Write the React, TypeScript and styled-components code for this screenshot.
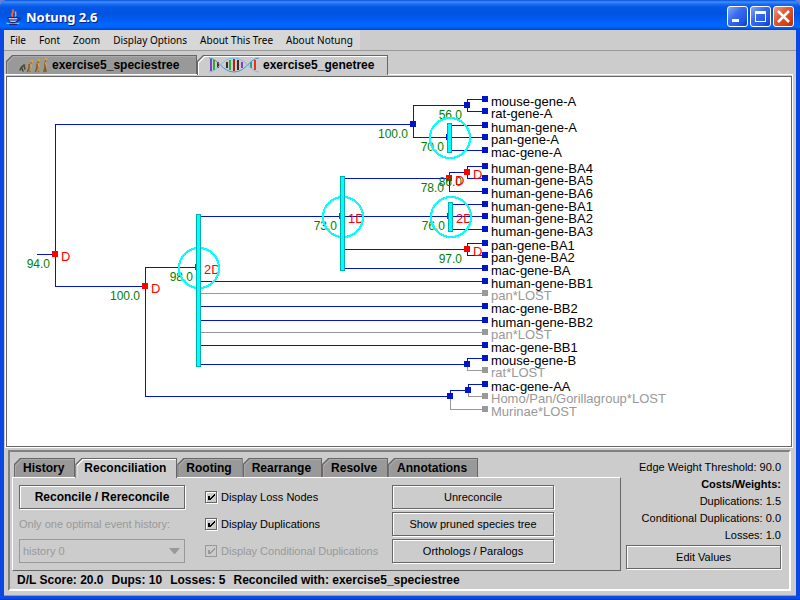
import React from "react";
import styled, { createGlobalStyle, css } from "styled-components";

const GlobalStyle = createGlobalStyle`
  *, *::before, *::after { box-sizing: border-box; }
  html, body { margin: 0; padding: 0; }
  body {
    background: #6b7fd0;
    color: #000;
    font: 11px/16px "Liberation Sans", Arial, sans-serif;
    overflow: hidden;
  }
  button, select, input { font: inherit; color: inherit; }
`;

const Window = styled.div`
  display: flex;
  flex-direction: column;
  min-height: 100vh;
  border-radius: 8px 8px 0 0;
  overflow: hidden;
  background: #0a48e0;
`;

const TitleBar = styled.header`
  display: flex;
  align-items: center;
  gap: 4px;
  height: 30px;
  padding: 3px 6px 0 6px;
  background: linear-gradient(
    #0a4fd8 0, #3c92ff 2px, #1b6cf2 4px, #0458e4 7px, #0053e1 14px,
    #0060f8 21px, #0068ff 26px, #005cf0 28px, #0040c8 30px
  );
`;

const Title = styled.h1`
  flex: 1;
  margin: 0;
  color: #fff;
  font: bold 13px/20px "Noto Sans", "Open Sans", sans-serif;
  text-shadow: 1px 1px 0 #0a1f80;
`;

const WindowButtons = styled.div`
  display: flex;
  gap: 2px;
`;

const WindowButton = styled.button<{ $danger?: boolean }>`
  display: grid;
  place-items: center;
  width: 21px;
  height: 21px;
  padding: 0;
  border: 1px solid #fff;
  border-radius: 3px;
  background: ${(p) =>
    p.$danger
      ? "linear-gradient(135deg, #f0a088 0, #e25a34 40%, #d23c10 80%, #a82c08 100%)"
      : "linear-gradient(135deg, #86a8f8 0, #3a6cf0 40%, #2258e8 75%, #0a3cb8 100%)"};
`;

const Content = styled.main`
  flex: 1;
  display: flex;
  flex-direction: column;
  margin: 0 4px;
  background: #ccc;
  border-bottom: 1px solid #999;
`;

const Footing = styled.div`
  height: 5px;
  background: linear-gradient(#1050e8 0, #0a48e0 3px, #001c98 5px);
`;

const MenuRow = styled.div`
  display: flex;
  border-bottom: 1px solid #999;
`;

const MenuBar = styled.nav`
  display: flex;
  height: 20px;
  padding-right: 1px;
  background: #d7d7d7;
`;

const MenuItems = styled.div`
  display: flex;
  gap: 1px;
`;

const MenuItem = styled.button`
  padding: 0 6px;
  border: 0;
  background: none;
  font: 10px/20px "Noto Sans", Verdana, sans-serif;
  white-space: nowrap;
`;

const TabStrip = styled.div<{ $top?: boolean }>`
  display: flex;
  padding: ${(p) => (p.$top ? "4px 0 0 2px" : "0 0 0 2px")};
`;

const cut = "polygon(6px 0, 100% 0, 100% 100%, 0 100%, 0 6px)";

const Tab = styled.button<{ $active?: boolean; $document?: boolean }>`
  position: relative;
  isolation: isolate;
  display: flex;
  align-items: center;
  gap: 4px;
  height: 19px;
  padding: ${(p) => (p.$document ? "0 10px 0 12px" : "0 11px 0 9px")};
  min-width: ${(p) => (p.$document ? "191px" : "0")};
  border: 0;
  background: #666;
  clip-path: ${cut};
  font-size: 12px;
  font-weight: bold;
  white-space: nowrap;
  &::before, &::after {
    content: "";
    position: absolute;
    z-index: -1;
    clip-path: ${cut};
  }
  &::before {
    inset: 1px 1px 0 1px;
    background: ${(p) => (p.$active ? "#fff" : "#aaa")};
  }
  &::after {
    inset: 2px 1px 0 2px;
    background: ${(p) => (p.$active ? "#ccc" : "#999")};
  }
  ${(p) =>
    p.$active &&
    css`
      height: 20px;
      margin-bottom: -1px;
      z-index: 1;
    `}
`;

const CanvasFrame = styled.section`
  flex: 1;
  display: flex;
  margin: 0 3px 2px 1px;
  border: 1px solid #fff;
  padding: 1px 0 0 0;
  background: #ccc;
`;

const Canvas = styled.div`
  flex: 1;
  border: 1px solid #666;
  background: #fff;
  overflow: hidden;
  svg { display: block; }
`;

const BottomPanel = styled.section`
  display: grid;
  grid-template-columns: minmax(0, 609px) minmax(160px, 1fr);
  margin: 0 5px 4px 4px;
  padding: 6px 8px 0 2px;
  border: 2px solid;
  border-color: #808080 #fff #fff #808080;
`;

const Pane = styled.div`
  display: grid;
  grid-template-columns: 166px 167px 162px;
  grid-auto-rows: 25px;
  gap: 2px 20px;
  align-items: center;
  padding: 6px 6px 7px 6px;
  border: 1px solid;
  border-color: #fff #666 #666 #fff;
`;

const MetalButton = styled.button<{ $strong?: boolean }>`
  width: 100%;
  height: 24px;
  padding: 0;
  border: 1px solid #666;
  background: #ccc;
  box-shadow: 1px 1px 0 #fff, inset 1px 1px 0 #fff;
  font-size: ${(p) => (p.$strong ? "12px" : "11px")};
  font-weight: ${(p) => (p.$strong ? "bold" : "normal")};
`;

const HistoryLabel = styled.label`
  color: #999;
  white-space: nowrap;
`;

const SelectBox = styled.div`
  display: grid;
  align-items: center;
  & > * { grid-area: 1 / 1; }
  svg { justify-self: end; margin-right: 5px; pointer-events: none; }
`;

const HistorySelect = styled.select`
  appearance: none;
  width: 100%;
  height: 24px;
  padding: 0 3px;
  border: 1px solid #999;
  border-radius: 0;
  background: #ccc;
  color: #999;
  opacity: 1;
`;

const CheckLabel = styled.label<{ $disabled?: boolean }>`
  display: flex;
  align-items: center;
  gap: 4px;
  color: ${(p) => (p.$disabled ? "#999" : "#000")};
  white-space: nowrap;
`;

const CheckBox = styled.span`
  display: grid;
  & > * { grid-area: 1 / 1; }
  svg { pointer-events: none; }
`;

const CheckInput = styled.input`
  appearance: none;
  width: 12px;
  height: 12px;
  margin: 0;
  border: 1px solid #666;
  box-shadow: 1px 1px 0 #fff, inset 1px 1px 0 #fff;
  &:disabled { border-color: #999; box-shadow: none; }
`;

const Status = styled.p`
  display: flex;
  gap: 8px;
  margin: 0;
  padding-left: 5px;
  font-size: 12px;
  font-weight: bold;
  line-height: 18px;
  white-space: nowrap;
`;

const Costs = styled.aside`
  display: flex;
  flex-direction: column;
  margin-left: 5px;
  text-align: right;
  line-height: 17px;
`;

const CostLine = styled.p<{ $strong?: boolean }>`
  margin: 0;
  font-weight: ${(p) => (p.$strong ? "bold" : "normal")};
  white-space: nowrap;
`;

const CostLines = styled.div`
  padding: 1px 0;
`;

/* ---------- icons ---------- */

const JavaIcon = () => (
  <svg width="16" height="16" viewBox="0 0 16 16" fill="none">
    <path d="M7 7.500C3.500 5 9 4 6.500 .5" stroke="#f0602c" strokeWidth="2" />
    <path d="M9 7.500c2.500-2-1-2.500 1-5" stroke="#ff9060" strokeWidth="1.500" />
    <path d="M2 8.500h10c0 2.500-1.500 4.500-3 5H5c-1.500-.5-3-2.500-3-5z" fill="#b8c4e8" stroke="#1c2470" />
    <path d="M12 9c3.500-1 3 2.500-.8 3M3 11h8" stroke="#1c2470" />
    <path d="M.5 14c3 1.500 9 1.500 13 0" stroke="#c0ccf0" />
    <path d="M3 15.500h8" stroke="#1c2470" />
  </svg>
);

const EvolutionIcon = () => (
  <svg width="30" height="16" viewBox="0 0 30 16" fill="none" strokeLinecap="round">
    <g stroke="#4a4636" strokeWidth="1.500">
      <path d="M2 13l1.500-3 2.500-1.500L7 12M3.500 10L5 14" />
    </g>
    <circle cx="6" cy="8.500" r="1.300" fill="#5a5038" />
    <g stroke="#8a5a14" strokeWidth="1.500">
      <path d="M13.500 5.500L11 8v3l1 3.500M11 11l-1.500 3.500" />
      <path d="M20.500 4.500L19 7v3.500l1.500 4M19 10.500L17.500 14.500" />
      <path d="M27.500 3.500L27 7v3.500l1 4M27 10.500l-1 4" />
    </g>
    <g stroke="#e8ac48">
      <path d="M12.500 6.500l1 3.500M19.500 6l2 3M27 5l1.500 4M12 12v2M20 12v2" />
    </g>
    <g fill="#dca040">
      <circle cx="14" cy="4" r="1.600" />
      <circle cx="21" cy="3" r="1.600" />
      <circle cx="28" cy="2" r="1.600" />
    </g>
  </svg>
);

const rungs: [number, number, number, string][] = [
  [2, 2, 14, "#7048c0"], [5, 3, 13, "#40a030"], [9, 5, 11, "#6c2020"],
  [18, 5, 11, "#303028"], [21, 3, 13, "#38a838"], [25, 2, 14, "#a02828"],
  [29, 3, 13, "#402820"], [33, 5, 11, "#8040c0"], [42, 5, 11, "#30a080"], [46, 3, 13, "#e03820"],
];

const DnaIcon = () => (
  <svg width="50" height="16" viewBox="0 0 50 16" fill="none">
    {rungs.map(([x, a, b, c]) => (
      <path key={x} d={`M${x} ${a}V${b}`} stroke={c} strokeWidth="2" />
    ))}
    <path d="M0 1C9 1 13 15 25 15S41 1 50 1" stroke="#3c98d8" />
    <path d="M0 15C9 15 13 1 25 1S41 15 50 15" stroke="#78bcec" />
  </svg>
);

const Tick = ({ color }: { color: string }) => (
  <svg width="12" height="12" viewBox="0 0 12 12" shapeRendering="crispEdges">
    <path d="M3 5h2v2h1V6h1V5h1V4h1V3h1v2H9v1H8v1H7v1H6v1H3z" fill={color} />
  </svg>
);

/* ---------- gene tree ---------- */

const BLUE = "#0014c8";
const GRAY = "#999";
const RED = "#f00";

const TreeText = styled.text`
  font: 13px "Liberation Sans", Arial, sans-serif;
`;
const ScoreText = styled(TreeText)`
  font-size: 12px;
  fill: #008000;
  text-anchor: end;
`;
const EventText = styled(TreeText)`
  fill: #f00;
`;

// name, y, x where the branch starts
const leaves: [string, number, number][] = [
  ["mouse-gene-A", 99, 467], ["rat-gene-A", 111, 467], ["human-gene-A", 125, 450],
  ["pan-gene-A", 137, 450], ["mac-gene-A", 150, 450], ["human-gene-BA4", 166, 467],
  ["human-gene-BA5", 178, 467], ["human-gene-BA6", 191, 449], ["human-gene-BA1", 204, 450],
  ["human-gene-BA2", 216, 450], ["human-gene-BA3", 229, 450], ["pan-gene-BA1", 243, 467],
  ["pan-gene-BA2", 255, 467], ["mac-gene-BA", 268, 343], ["human-gene-BB1", 281, 199],
  ["pan*LOST", 293, 199], ["mac-gene-BB2", 306, 199], ["human-gene-BB2", 320, 199],
  ["pan*LOST", 332, 199], ["mac-gene-BB1", 345, 199], ["mouse-gene-B", 358, 467],
  ["rat*LOST", 370, 467], ["mac-gene-AA", 384, 468], ["Homo/Pan/Gorillagroup*LOST", 396, 468],
  ["Murinae*LOST", 409, 450],
];

// x1, x2, y
const branches: [number, number, number][] = [
  [37, 55, 254], [55, 413, 124], [413, 467, 105], [413, 449, 137], [55, 145, 286],
  [145, 198, 267], [199, 342, 216], [343, 449, 178], [449, 467, 172], [343, 450, 216],
  [343, 467, 249], [199, 467, 364], [145, 450, 396], [450, 468, 390],
];

// x, y1, y2, colour
const stems: [number, number, number, string][] = [
  [55, 124, 286, BLUE], [413, 105, 137, BLUE], [467, 99, 111, BLUE], [145, 267, 396, BLUE],
  [467, 166, 178, BLUE], [449, 172, 191, BLUE], [467, 243, 255, BLUE], [467, 358, 364, BLUE],
  [467, 364, 370, GRAY], [468, 384, 390, BLUE], [468, 390, 396, GRAY], [450, 390, 396, BLUE],
  [450, 396, 409, GRAY],
];

// x, y, colour, score, event
const nodes: [number, number, string, string, string][] = [
  [55, 254, RED, "94.0", "D"], [145, 286, RED, "100.0", "D"], [413, 124, BLUE, "100.0", ""],
  [467, 105, BLUE, "56.0", ""], [449, 137, BLUE, "70.0", ""], [467, 172, RED, "86.0", "D"],
  [449, 178, RED, "78.0", "D"], [450, 216, RED, "76.0", "2D"], [467, 249, RED, "97.0", "D"],
  [342, 216, RED, "73.0", "1D"], [198, 267, RED, "98.0", "2D"], [467, 364, BLUE, "", ""],
  [468, 390, BLUE, "", ""], [450, 396, BLUE, "", ""],
];

// bar x, top, bottom, circle x, circle y
const polytomies: [number, number, number, number, number][] = [
  [447, 123, 153, 450, 138], [448, 202, 232, 451, 217],
  [340, 176, 271, 343, 217], [196, 214, 367, 199, 268],
];

const GeneTree = () => (
  <svg width="784" height="369" viewBox="7 77 784 369" role="img" aria-label="Gene tree">
    <g shapeRendering="crispEdges">
      {leaves.map(([n, y, x], i) => (
        <rect key={i} x={x} y={y} width={485 - x} height="1" fill={n.endsWith("LOST") ? GRAY : BLUE} />
      ))}
      {branches.map(([a, b, y], i) => (
        <rect key={i} x={a} y={y} width={b - a} height="1" fill={BLUE} />
      ))}
      {stems.map(([x, a, b, c], i) => (
        <rect key={i} x={x} y={a} width="1" height={b - a + 1} fill={c} />
      ))}
      {leaves.map(([n, y], i) => (
        <rect key={i} x="482" y={y - 3} width="6" height="6" fill={n.endsWith("LOST") ? GRAY : BLUE} />
      ))}
      {nodes.map(([x, y, c], i) => (
        <rect key={i} x={x - 3} y={y - 3} width="6" height="6" fill={c} />
      ))}
    </g>
    {nodes.map(([x, y, , score, event], i) => (
      <g key={i}>
        {score && <ScoreText x={x - 5} y={y + 14}>{score}</ScoreText>}
        {event && <EventText x={x + 6} y={y + 7}>{event}</EventText>}
      </g>
    ))}
    {leaves.map(([n, y], i) => (
      <TreeText key={i} x="491" y={y + 7} fill={n.endsWith("LOST") ? GRAY : "#000"}>{n}</TreeText>
    ))}
    {polytomies.map(([x, a, b, cx, cy], i) => (
      <g key={i} shapeRendering="crispEdges">
        <circle cx={cx} cy={cy} r="20" fill="none" stroke="#0ff" strokeWidth="2" />
        <rect x={x} y={a} width="5" height={b - a} fill="#00b0b0" />
        <rect x={x + 1} y={a + 1} width="3" height={b - a - 2} fill="#0ff" />
      </g>
    ))}
  </svg>
);

/* ---------- page ---------- */

const menus = ["File", "Font", "Zoom", "Display Options", "About This Tree", "About Notung"];
const tools = ["History", "Reconciliation", "Rooting", "Rearrange", "Resolve", "Annotations"];

const Check = ({ label, disabled }: { label: string; disabled?: boolean }) => (
  <CheckLabel $disabled={disabled}>
    <CheckBox>
      <CheckInput type="checkbox" defaultChecked disabled={disabled} />
      <Tick color={disabled ? "#999" : "#000"} />
    </CheckBox>
    {label}
  </CheckLabel>
);

export default function App() {
  return (
    <>
      <GlobalStyle />
      <Window>
        <TitleBar>
          <JavaIcon />
          <Title>Notung 2.6</Title>
          <WindowButtons>
            <WindowButton aria-label="Minimize">
              <svg width="19" height="19"><rect x="4" y="12" width="7" height="3" fill="#fff" /></svg>
            </WindowButton>
            <WindowButton aria-label="Maximize">
              <svg width="19" height="19" shapeRendering="crispEdges">
                <path d="M4 4h11v11H4zM5 7v7h9V7z" fill="#fff" fillRule="evenodd" />
              </svg>
            </WindowButton>
            <WindowButton aria-label="Close" $danger>
              <svg width="19" height="19"><path d="M4 4l11 11M15 4L4 15" stroke="#fff" strokeWidth="2.500" /></svg>
            </WindowButton>
          </WindowButtons>
        </TitleBar>
        <Content>
          <MenuRow>
            <MenuBar>
              <MenuItems>
                {menus.map((m) => <MenuItem key={m}>{m}</MenuItem>)}
              </MenuItems>
            </MenuBar>
          </MenuRow>
          <TabStrip $top role="tablist">
            <Tab $document role="tab"><EvolutionIcon />exercise5_speciestree</Tab>
            <Tab $document $active role="tab" aria-selected><DnaIcon />exercise5_genetree</Tab>
          </TabStrip>
          <CanvasFrame>
            <Canvas><GeneTree /></Canvas>
          </CanvasFrame>
          <BottomPanel>
            <div>
              <TabStrip role="tablist">
                {tools.map((t) => (
                  <Tab key={t} role="tab" $active={t === "Reconciliation"} aria-selected={t === "Reconciliation"}>{t}</Tab>
                ))}
              </TabStrip>
              <Pane>
                <MetalButton $strong>Reconcile / Rereconcile</MetalButton>
                <Check label="Display Loss Nodes" />
                <MetalButton>Unreconcile</MetalButton>
                <HistoryLabel htmlFor="history">Only one optimal event history:</HistoryLabel>
                <Check label="Display Duplications" />
                <MetalButton>Show pruned species tree</MetalButton>
                <SelectBox>
                  <HistorySelect id="history" disabled><option>history 0</option></HistorySelect>
                  <svg width="11" height="6"><path d="M0 0h11L6 6H5z" fill="#999" /></svg>
                </SelectBox>
                <Check label="Display Conditional Duplications" disabled />
                <MetalButton>Orthologs / Paralogs</MetalButton>
              </Pane>
              <Status>
                <span>D/L Score: 20.0</span>
                <span>Dups: 10</span>
                <span>Losses: 5</span>
                <span>Reconciled with: exercise5_speciestree</span>
              </Status>
            </div>
            <Costs>
              <CostLines>
                <CostLine>Edge Weight Threshold: 90.0</CostLine>
                <CostLine $strong>Costs/Weights:</CostLine>
                <CostLine>Duplications: 1.5</CostLine>
                <CostLine>Conditional Duplications: 0.0</CostLine>
                <CostLine>Losses: 1.0</CostLine>
              </CostLines>
              <MetalButton>Edit Values</MetalButton>
            </Costs>
          </BottomPanel>
        </Content>
        <Footing />
      </Window>
    </>
  );
}
